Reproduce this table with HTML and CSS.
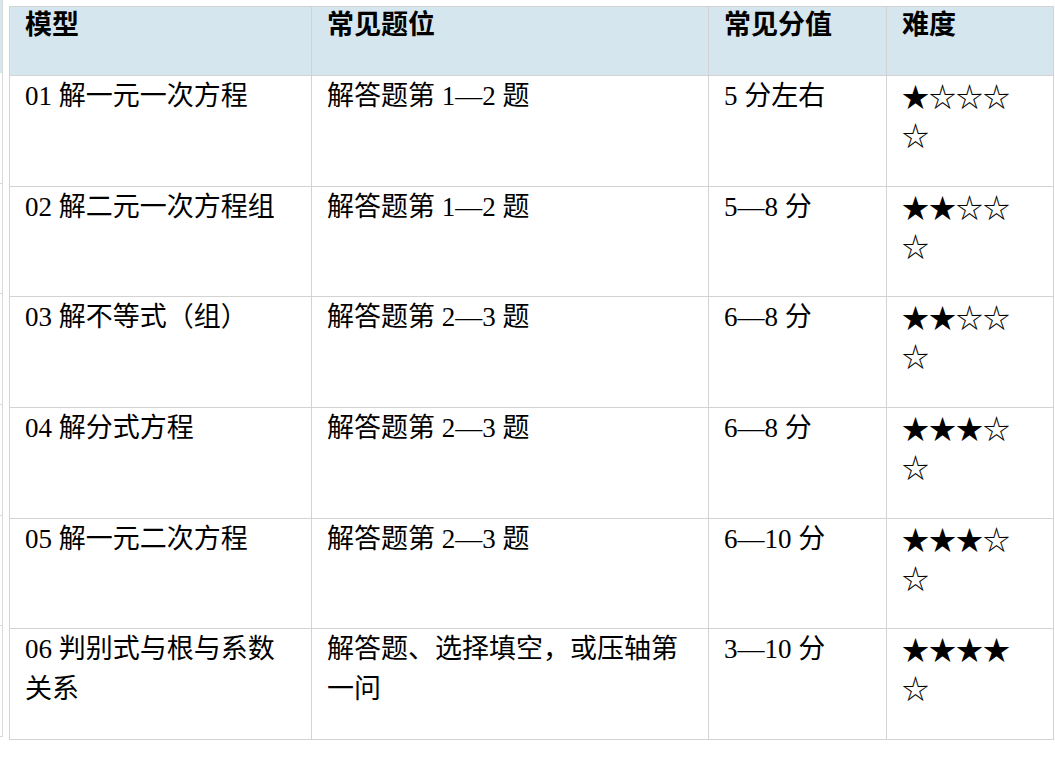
FILE: index.html
```html
<!DOCTYPE html>
<html lang="zh-CN">
<head>
<meta charset="utf-8">
<title>模型表</title>
<link rel="stylesheet" href="styles.css">
</head>
<body>
<div class="page">
  <div class="stub">
    <div class="stub-head"></div>
    <div class="stub-row"></div>
    <div class="stub-row"></div>
    <div class="stub-row"></div>
    <div class="stub-row"></div>
    <div class="stub-row"></div>
    <div class="stub-row"></div>
  </div>
  <table class="models">
    <colgroup>
      <col class="c1"><col class="c2"><col class="c3"><col class="c4">
    </colgroup>
    <thead>
      <tr><th>模型</th><th>常见题位</th><th>常见分值</th><th>难度</th></tr>
    </thead>
    <tbody>
      <tr><td>01 解一元一次方程</td><td>解答题第 1—2 题</td><td>5 分左右</td><td class="stars">★☆☆☆<br>☆</td></tr>
      <tr><td>02 解二元一次方程组</td><td>解答题第 1—2 题</td><td>5—8 分</td><td class="stars">★★☆☆<br>☆</td></tr>
      <tr><td>03 解不等式（组）</td><td>解答题第 2—3 题</td><td>6—8 分</td><td class="stars">★★☆☆<br>☆</td></tr>
      <tr><td>04 解分式方程</td><td>解答题第 2—3 题</td><td>6—8 分</td><td class="stars">★★★☆<br>☆</td></tr>
      <tr><td>05 解一元二次方程</td><td>解答题第 2—3 题</td><td>6—10 分</td><td class="stars">★★★☆<br>☆</td></tr>
      <tr><td>06 判别式与根与系数<br>关系</td><td>解答题、选择填空，或压轴第<br>一问</td><td>3—10 分</td><td class="stars">★★★★<br>☆</td></tr>
    </tbody>
  </table>
</div>
</body>
</html>
```

FILE: styles.css
```css
html, body {
  margin: 0;
  padding: 0;
  background: #ffffff;
}

.page {
  display: flex;
  align-items: flex-start;
  gap: 6px;
  padding-top: 6px;
}

.stub {
  width: 2px;
  margin-top: -6px;
  border-right: 1px solid #dadada;
}

.stub-head {
  height: 73px;
  background: #d6e6ee;
}

.stub-row {
  height: 109.67px;
  border-bottom: 1px solid #d6d6d6;
}

.models {
  border-collapse: collapse;
  table-layout: fixed;
  width: 1044px;
  font-family: "Liberation Serif", "Noto Sans CJK SC", serif;
  font-size: 27px;
  color: #000000;
}

.c1 { width: 302px; }
.c2 { width: 397px; }
.c3 { width: 178px; }
.c4 { width: 167px; }

.models th,
.models td {
  border: 1px solid #d3d3d3;
  text-align: left;
  vertical-align: top;
  padding: 0 14px 0 15px;
  white-space: nowrap;
}

.models th {
  background: #d6e6ee;
  font-family: "Noto Sans CJK SC", sans-serif;
  font-weight: 700;
  height: 68px;
  line-height: 31px;
}

.models td {
  height: 109.67px;
  line-height: 40px;
  padding-top: 0;
}

.models td.stars {
  font-family: "Noto Sans CJK SC", "DejaVu Sans", sans-serif;
  line-height: 39px;
  padding-top: 0;
}

.models td.stars {
  position: relative;
  top: 0;
}
```
